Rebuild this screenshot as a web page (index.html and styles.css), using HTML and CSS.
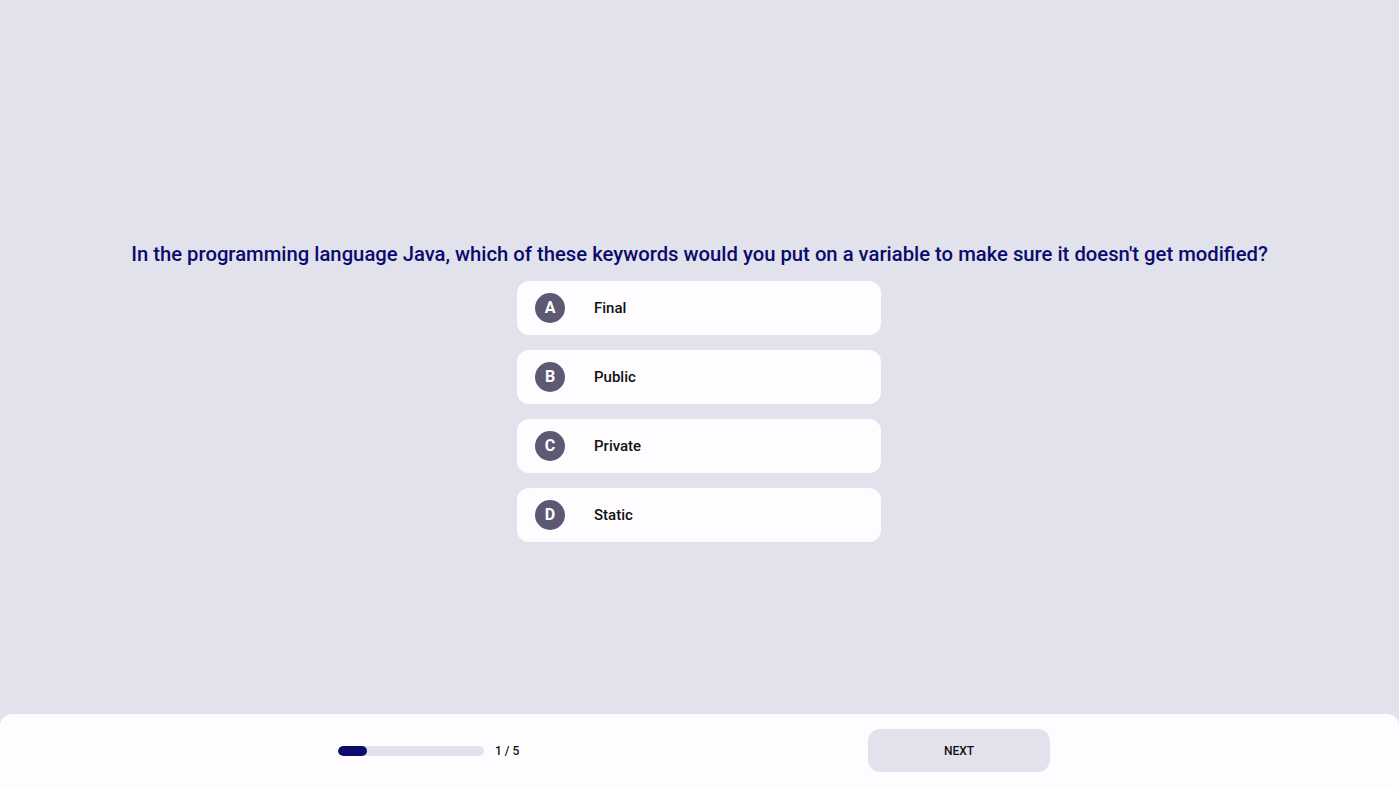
FILE: index.html
```html
<!DOCTYPE html>
<html lang="en">
<head>
<meta charset="utf-8">
<title>Quiz</title>
<link rel="stylesheet" href="styles.css">
</head>
<body>
<div class="page">
  <main class="stage">
    <h1 class="question">In the programming language Java, which of these keywords would you put on a variable to make sure it doesn't get modified?</h1>
    <ul class="options">
      <li class="option"><span class="letter">A</span><span class="label">Final</span></li>
      <li class="option"><span class="letter">B</span><span class="label">Public</span></li>
      <li class="option"><span class="letter">C</span><span class="label">Private</span></li>
      <li class="option"><span class="letter">D</span><span class="label">Static</span></li>
    </ul>
  </main>
  <footer class="footer">
    <div class="progress">
      <div class="track"><div class="fill" style="width:20%"></div></div>
      <span class="count">1 / 5</span>
    </div>
    <button class="next">NEXT</button>
  </footer>
</div>
</body>
</html>
```

FILE: styles.css
```css
* { box-sizing: border-box; }
html, body { margin: 0; padding: 0; }
body {
  background: #e2e2ec;
  font-family: Roboto, "Liberation Sans", Arial, sans-serif;
  height: 787px;
  overflow: hidden;
}
.page {
  display: flex;
  flex-direction: column;
  height: 787px;
}
.stage {
  height: 714px;
  display: flex;
  flex-direction: column;
  align-items: center;
  justify-content: center;
  padding-top: 69px;
}
.question {
  margin: 0 0 15px 0;
  font-size: 20.25px;
  line-height: 24px;
  font-weight: 500;
  color: #0b0b6f;
  text-align: center;
}
.options {
  list-style: none;
  margin: 0 1px 0 0;
  padding: 0;
  display: flex;
  flex-direction: column;
  gap: 15px;
}
.option {
  width: 364px;
  height: 54px;
  background: #fefcff;
  border-radius: 12px;
  display: flex;
  align-items: center;
  padding-left: 18px;
}
.letter {
  width: 30px;
  height: 30px;
  border-radius: 50%;
  background: #5b5a72;
  color: #ffffff;
  font-weight: 700;
  font-size: 16px;
  display: flex;
  align-items: center;
  justify-content: center;
}
.label {
  margin-left: 29px;
  font-size: 15px;
  font-weight: 500;
  color: #111111;
}
.footer {
  flex: 1;
  background: #fefcff;
  border-radius: 12px 12px 0 0;
  display: flex;
  align-items: flex-start;
  padding-top: 15px;
  padding-left: 338px;
}
.progress {
  display: flex;
  align-items: center;
  height: 43px;
  gap: 11px;
  width: 530px;
}
.track {
  width: 146px;
  height: 10px;
  border-radius: 5px;
  background: #e2e2ec;
  overflow: hidden;
}
.fill {
  height: 100%;
  background: #0b0b6f;
  border-radius: 5px;
}
.count {
  font-size: 12px;
  font-weight: 500;
  color: #111111;
}
.next {
  width: 182px;
  height: 43px;
  border: none;
  border-radius: 12px;
  background: #e2e2ec;
  font-family: Roboto, "Liberation Sans", Arial, sans-serif;
  font-size: 12px;
  font-weight: 500;
  color: #111111;
  cursor: pointer;
}
```
